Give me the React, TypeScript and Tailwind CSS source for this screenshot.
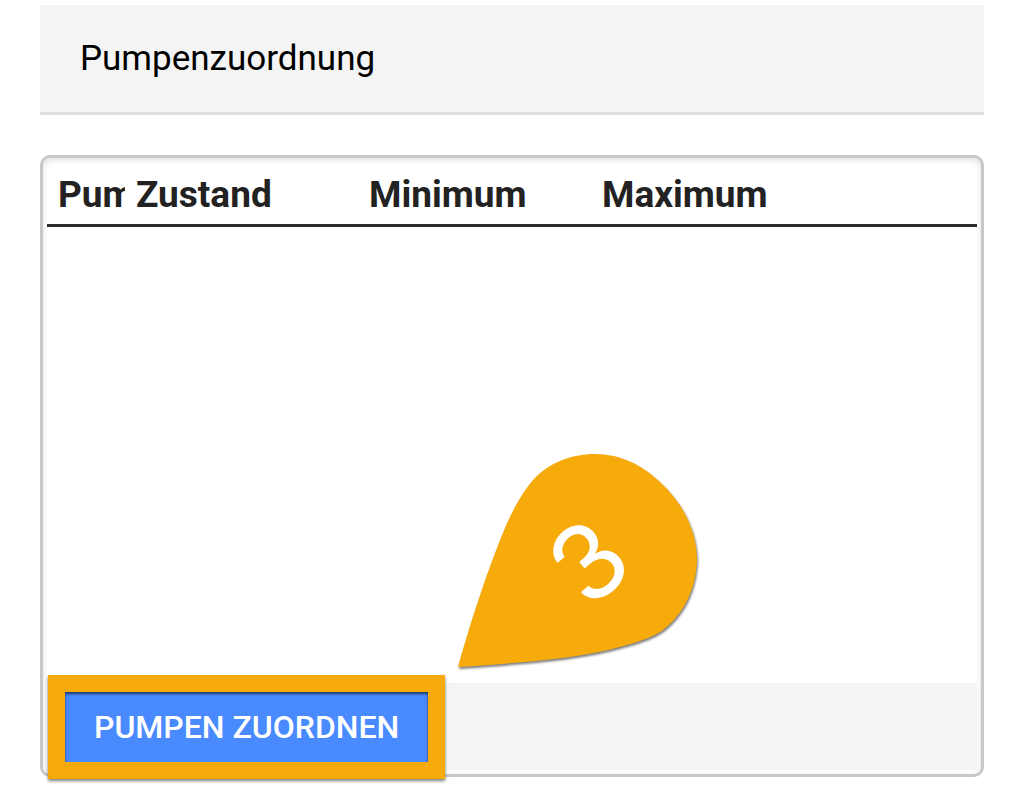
const columns = [
  { label: "Pum", width: "w-[78px]" },
  { label: "Zustand", width: "w-[233px]" },
  { label: "Minimum", width: "w-[233px]" },
  { label: "Maximum", width: "" },
];

function StepMarker() {
  return (
    <div className="pointer-events-none absolute right-[271px] bottom-[94px] flex h-[235px] w-[260px] items-center justify-center">
      <svg
        className="absolute inset-0 drop-shadow-[1px_2px_1px_rgba(0,0,0,0.5)]"
        viewBox="450 445 260 235"
        aria-hidden="true"
      >
        <path
          fill="#f7ab0a"
          d="M458 667 C474 610 492 558 508 521 C517 502 525 489 534 479 C549 463 571 454 595 454 C621 454 642 465 660 482 C684 504 697 532 697 560 C696 588 685 613 663 630 C653 637 641 641 627 645 C606 651 585 655 563 658 C528 662 492 665 458 667 Z"
        />
      </svg>
      <span className="relative mr-1 mb-1 ml-5 -rotate-[41deg] font-[Inter,sans-serif] text-[104px] leading-none text-white">
        3
      </span>
    </div>
  );
}

export default function App() {
  return (
    <main className="bg-white px-10 pt-[5px] pb-2 font-[Roboto,sans-serif]">
      <header className="border-b-[3px] border-[#e0e0e0] bg-[#f4f4f4] px-10 py-8">
        <h1 className="text-[35px] leading-[43px] text-black">Pumpenzuordnung</h1>
      </header>

      <section className="relative mt-10 rounded-[10px] border-[3px] border-[#c8c8c8] p-1 shadow-[inset_0_2px_6px_rgba(0,0,0,0.12)]">
        <div className="min-h-[521px]">
          <table className="w-full table-fixed border-collapse">
            <thead>
              <tr className="border-b-[3px] border-[#2b2b2b]">
                {columns.map((column) => (
                  <th
                    key={column.label}
                    scope="col"
                    className={`${column.width} pt-[10px] pb-[6px] pl-[11px] text-left text-[37px] leading-[46px] font-bold text-[#222]`}
                  >
                    <div className="overflow-hidden whitespace-nowrap">{column.label}</div>
                  </th>
                ))}
              </tr>
            </thead>
            <tbody />
          </table>
        </div>

        <footer className="flex bg-[#f4f4f4] px-[18px] pt-[9px] pb-2">
          <div className="relative">
            <button
              type="button"
              className="h-[70px] bg-[#4a8aff] px-[29px] text-[32px] leading-[40px] font-medium text-white"
            >
              PUMPEN ZUORDNEN
            </button>
            <div className="pointer-events-none absolute -inset-[17px] border-[17px] border-[#f7ab0a] shadow-[0_2px_3px_rgba(0,0,0,0.5),inset_0_2px_3px_rgba(0,0,0,0.6)]" />
          </div>
        </footer>

        <StepMarker />
      </section>
    </main>
  );
}
